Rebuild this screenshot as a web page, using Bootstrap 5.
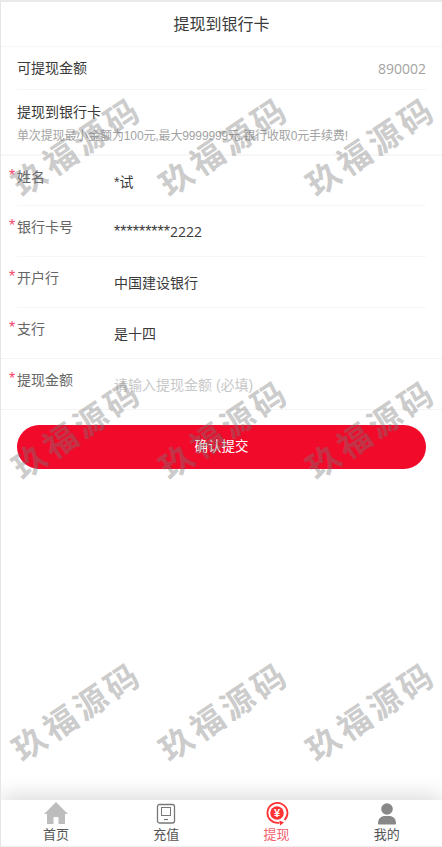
<!DOCTYPE html>
<html lang="zh-CN">
<head>
    <meta charset="UTF-8">
    <title>提现到银行卡</title>
    <link href="https://cdn.jsdelivr.net/npm/bootstrap@5.3.0/dist/css/bootstrap.min.css" rel="stylesheet">
    <style>
        html, body { height: 100%; }
        body { font-family: "Liberation Sans", "Noto Sans CJK SC", sans-serif; font-size: 14px; color: #3a3a3a; background: #fff; }
        .app-page { position: relative; height: 847px; overflow: hidden; border-left: 1px solid #e6e6e6; border-top: 2px solid #e9e9e9; display: flex; flex-direction: column; }
        .app-title { height: 45px; line-height: 45px; font-size: 16px; text-align: center; border-bottom: 1px solid #f6f6f6; color: #3a3a3a; }
        .info-line { margin: 0 16px; border-bottom: 1px solid #f5f5f5; }
        .info-top { height: 43px; }
        .info-value { color: #a3a3a3; font-family: "Open Sans", sans-serif; font-size: 14px; }
        .info-block { height: 66px; margin: 0; padding: 12px 16px 0; border-bottom: 2px solid #f7f7f7; line-height: 20px; }
        .info-hint { font-size: 12px; color: #a3a3a3; line-height: 20px; margin-top: 4px; white-space: nowrap; letter-spacing: -.13px; }
        .field-row { height: 51px; flex: none; display: flex; margin-left: 16px; margin-right: 16px; border-bottom: 1px solid #f7f7f7; }
        .field-row.first { height: 50px; }
        .field-row.wide { margin: 0; padding-left: 16px; padding-right: 16px; border-bottom-color: #f3f3f3; }
        .field-label { position: relative; width: 97px; padding-top: 11px; line-height: 20px; color: #666; flex: none; }
        .field-label::before { content: "*"; position: absolute; left: -8px; top: 10px; font-size: 16px; color: #f0476a; }
        .field-value { padding-top: 16px; line-height: 20px; color: #3a3a3a; }
        .field-value.empty { color: #c8c8c8; }
        .mask-stars { font-size: 16px; }
        .mask-digits { font-family: "Open Sans", sans-serif; }
        .submit-wrap { padding: 15px 16px 0; }
        .submit-btn { display: block; width: 100%; height: 44px; border: 0; border-radius: 22px; background: #f10a2a; color: #fff; font-size: 13.500px; }
        .tab-bar { position: absolute; left: 0; right: 0; bottom: 0; height: 47px; background: #fff; border-bottom: 1px solid #f0f0f0; box-shadow: 0 -6px 20px rgba(0, 0, 0, .13); display: flex; }
        .tab-item { flex: 1; display: flex; flex-direction: column; align-items: center; font-size: 13px; line-height: 17px; color: #555; padding-top: 2px; }
        .tab-item svg { display: block; }
        .tab-item.active { color: #f6626e; }
        .mark-layer { position: absolute; inset: 0; pointer-events: none; z-index: 5; }
        .mark-word { position: absolute; width: 148px; margin-left: -74px; text-align: center; font-family: "Noto Sans CJK SC", sans-serif; font-weight: 700; font-size: 33px; line-height: 34px; letter-spacing: 4px; color: rgba(120, 120, 120, .38); transform: rotate(-34deg); white-space: nowrap; }
        .mark-word:nth-child(3n+1) { left: 75px; }
        .mark-word:nth-child(3n+2) { left: 222px; }
        .mark-word:nth-child(3n) { left: 369px; }
        .mark-word:nth-child(-n+3) { top: 126px; }
        .mark-word:nth-child(n+4) { top: 409px; }
        .mark-word:nth-child(n+7) { top: 691px; }
    </style>
</head>
<body>
    <div class="app-page">
        <div class="app-title">提现到银行卡</div>

        <div class="info-line info-top d-flex justify-content-between align-items-center">
            <span>可提现金额</span>
            <span class="info-value">890002</span>
        </div>
        <div class="info-block">
            <div>提现到银行卡</div>
            <div class="info-hint">单次提现最小金额为100元,最大9999999元,银行收取0元手续费!</div>
        </div>

        <div class="field-row first">
            <div class="field-label">姓名</div>
            <div class="field-value">*试</div>
        </div>
        <div class="field-row">
            <div class="field-label">银行卡号</div>
            <div class="field-value"><span class="mask-stars">*********</span><span class="mask-digits">2222</span></div>
        </div>
        <div class="field-row">
            <div class="field-label">开户行</div>
            <div class="field-value">中国建设银行</div>
        </div>
        <div class="field-row wide">
            <div class="field-label">支行</div>
            <div class="field-value">是十四</div>
        </div>
        <div class="field-row wide">
            <div class="field-label">提现金额</div>
            <div class="field-value empty">请输入提现金额 (必填)</div>
        </div>

        <div class="submit-wrap">
            <button type="button" class="submit-btn">确认提交</button>
        </div>

        <div class="tab-bar">
            <div class="tab-item">
                <svg width="24" height="24" viewBox="0 0 24 24"><path d="M12 0 24 12h-3v10H3V12H0z" fill="#bdbdbd"/><rect x="9.500" y="15" width="5" height="7" fill="#fff"/></svg>
                <span>首页</span>
            </div>
            <div class="tab-item">
                <svg width="20" height="24" viewBox="0 0 20 24" fill="none" stroke="#777"><rect x="1.500" y="2.500" width="17" height="18.500" rx="2" stroke-width="1.300"/><rect x="5.500" y="5.500" width="9" height="8" stroke-width="1"/><path d="M8 17.500h4" stroke-width="1.200"/></svg>
                <span>充值</span>
            </div>
            <div class="tab-item active">
                <svg width="24" height="24" viewBox="0 0 24 24"><path d="M14.500 20.700A10 10 0 1 1 19.500 18" fill="none" stroke="#f33" stroke-width="1.800"/><path d="m14.500 18.500 4.500 2-4 3z" fill="#f33"/><circle cx="12" cy="11" r="6.800" fill="#f33"/><text x="12" y="15" text-anchor="middle" font-size="11" font-weight="700" fill="#fff" font-family="Liberation Sans, sans-serif">¥</text></svg>
                <span>提现</span>
            </div>
            <div class="tab-item">
                <svg width="24" height="24" viewBox="0 0 24 24" fill="#888"><circle cx="12" cy="7" r="5.800"/><path d="M3 21.500c0-5 3-7 6-7.500h6c3 .5 6 2.500 6 7.500 0 .8-.5 1-1 1H4c-.5 0-1-.2-1-1z"/></svg>
                <span>我的</span>
            </div>
        </div>

        <div class="mark-layer">
            <div class="mark-word">玖福源码</div>
            <div class="mark-word">玖福源码</div>
            <div class="mark-word">玖福源码</div>
            <div class="mark-word">玖福源码</div>
            <div class="mark-word">玖福源码</div>
            <div class="mark-word">玖福源码</div>
            <div class="mark-word">玖福源码</div>
            <div class="mark-word">玖福源码</div>
            <div class="mark-word">玖福源码</div>
        </div>
    </div>
    <script src="https://cdn.jsdelivr.net/npm/bootstrap@5.3.0/dist/js/bootstrap.bundle.min.js"></script>
</body>
</html>
